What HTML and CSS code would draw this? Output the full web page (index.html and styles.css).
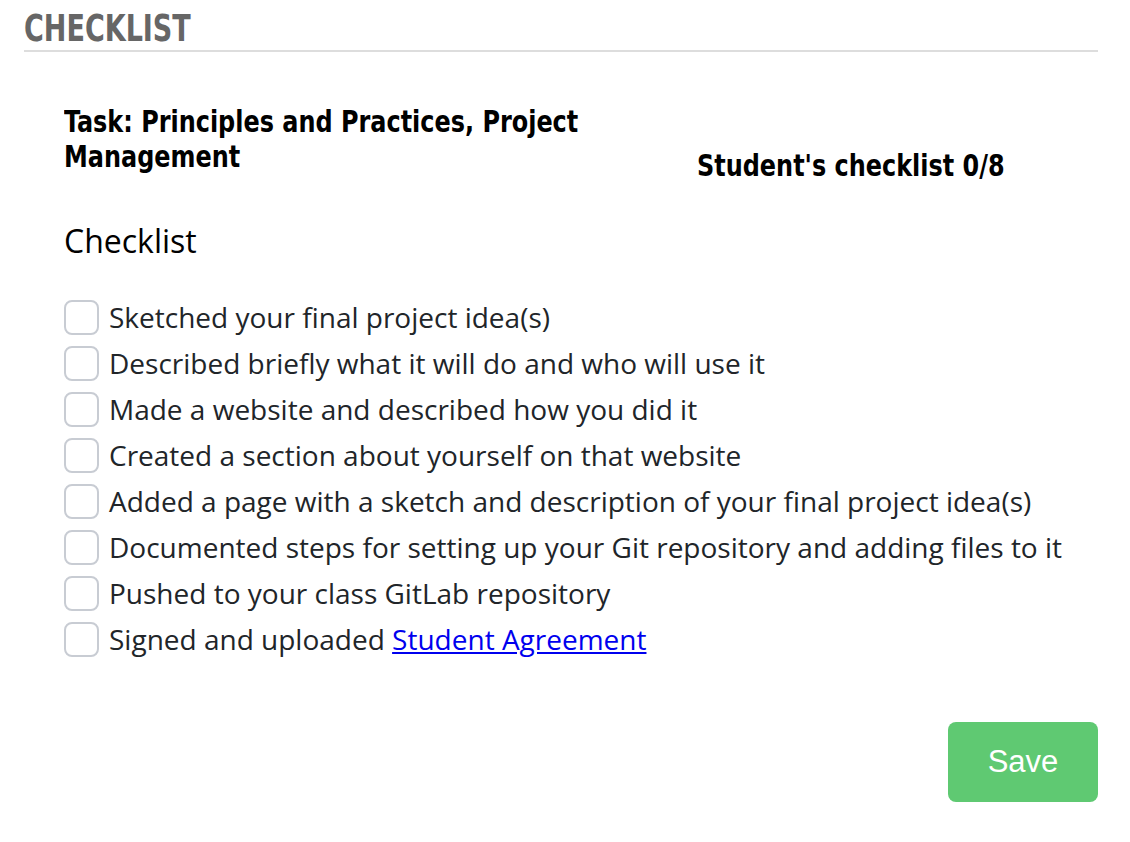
FILE: index.html
```html
<!DOCTYPE html>
<html>
<head>
<meta charset="utf-8">
<link rel="stylesheet" href="styles.css">
</head>
<body>
<div class="page">
  <h2 class="title"><span class="title-text">CHECKLIST</span></h2>
  <div class="content">
    <div class="task-row">
      <div class="task">Task: Principles and Practices, Project Management</div>
      <div class="count"><span class="count-text">Student's checklist 0/8</span></div>
    </div>
    <div class="label">Checklist</div>
    <ul class="items">
      <li class="item"><span class="box"></span><span class="text">Sketched your final project idea(s)</span></li>
      <li class="item"><span class="box"></span><span class="text">Described briefly what it will do and who will use it</span></li>
      <li class="item"><span class="box"></span><span class="text">Made a website and described how you did it</span></li>
      <li class="item"><span class="box"></span><span class="text">Created a section about yourself on that website</span></li>
      <li class="item"><span class="box"></span><span class="text">Added a page with a sketch and description of your final project idea(s)</span></li>
      <li class="item"><span class="box"></span><span class="text">Documented steps for setting up your Git repository and adding files to it</span></li>
      <li class="item"><span class="box"></span><span class="text">Pushed to your class GitLab repository</span></li>
      <li class="item"><span class="box"></span><span class="text">Signed and uploaded <a class="link" href="#">Student Agreement</a></span></li>
    </ul>
    <div class="actions">
      <button class="save">Save</button>
    </div>
  </div>
</div>
</body>
</html>
```
FILE: styles.css
```css
html, body {
  margin: 0;
  padding: 0;
  background: #ffffff;
}
.page {
  padding: 0 32px 0 24px;
}
.title {
  margin: 0;
  padding-top: 6px;
  height: 44px;
  font-family: "DejaVu Sans Condensed", "DejaVu Sans", sans-serif;
  font-weight: bold;
  font-size: 38px;
  line-height: 44px;
  color: #666666;
  border-bottom: 2px solid #dddddd;
}
.title-text {
  display: inline-block;
  transform: scaleX(0.79);
  transform-origin: left center;
}
.content {
  padding: 0 0 0 40px;
}
.task-row {
  display: grid;
  grid-template-columns: 633px 1fr;
  margin-top: 52px;
}
.task, .count {
  font-family: "DejaVu Sans Condensed", "DejaVu Sans", sans-serif;
  font-weight: bold;
  font-size: 30px;
  line-height: 35px;
  color: #000000;
}
.task {
  width: 600px;
  transform: scaleX(0.887);
  transform-origin: left top;
}
.count {
  padding-top: 44px;
  white-space: nowrap;
}
.count-text {
  display: inline-block;
  transform: scaleX(0.887);
  transform-origin: left center;
}
.label {
  margin-top: 38px;
  font-family: "Open Sans", sans-serif;
  font-size: 32px;
  line-height: 40px;
  color: #000000;
}
.items {
  list-style: none;
  margin: 33px 0 0 0;
  padding: 0;
}
.item {
  display: flex;
  align-items: center;
  height: 46px;
}
.box {
  width: 31px;
  height: 31px;
  border: 2px solid #c8ccd3;
  border-radius: 8px;
  margin-right: 10px;
  flex: none;
}
.text {
  font-family: "Open Sans", sans-serif;
  font-size: 28px;
  color: #212529;
}
.link {
  color: #0000ee;
  text-decoration: underline;
}
.actions {
  display: flex;
  justify-content: flex-end;
  margin-top: 60px;
}
.save {
  width: 150px;
  height: 80px;
  border: none;
  border-radius: 8px;
  background: #5fc972;
  color: #ffffff;
  font-family: "Liberation Sans", Arial, sans-serif;
  font-size: 31px;
  cursor: pointer;
}
```
